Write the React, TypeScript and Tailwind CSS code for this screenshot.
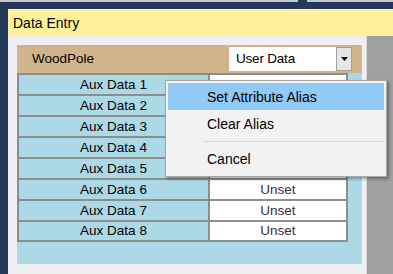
import React from "react";

const font = { fontFamily: '"Liberation Sans", Arial, sans-serif' };

export default function App() {
  const rows = [1, 2, 3, 4, 5, 6, 7, 8];
  return (
    <div
      className="relative w-[393px] h-[274px] overflow-hidden bg-[#26395a] flex flex-col text-black"
      style={font}
    >
      <div className="h-[2px] flex shrink-0">
        <div className="w-[298px] bg-[#c3c8d1]" />
        <div className="w-[9px]" />
        <div className="flex-1 bg-[#c3c8d1]" />
      </div>
      <div className="flex-1 flex flex-col pl-[8px] pt-[7px]">
        <div className="h-[27px] shrink-0 bg-[#fff19c] flex items-center pl-[5px] text-[14px] leading-none">
          Data Entry
        </div>
        <div className="flex-1 flex">
          <div className="w-[359px] bg-[#f0f0f0] pl-[9px] pt-[9px] border-r border-[#d8d8d8]">
            <div className="w-[345px] h-[219px] bg-[#add8e6] flex flex-col">
              <div className="h-[28px] shrink-0 bg-[#d2b48c] flex items-center">
                <span className="pl-[15px] text-[13.5px] leading-none">WoodPole</span>
                <div className="ml-auto mr-[10px] flex h-[24px]">
                  <div className="w-[107px] bg-white flex items-center pl-[7px] text-[13.5px] leading-none tracking-[-0.2px]">
                    User Data
                  </div>
                  <div className="w-[16px] bg-[#e6e6e6] border border-[#a0a0a0] flex items-center justify-center">
                    <svg width="7" height="4" viewBox="0 0 7 4">
                      <path d="M0 0H7L3.5 4Z" fill="#000" />
                    </svg>
                  </div>
                </div>
              </div>
              <div className="w-[331px] flex flex-col">
                {rows.map((n) => (
                  <div
                    key={n}
                    className={`flex ${n === 8 ? "h-[22px] border-b-2 border-[#8d8d8d]" : "h-[21px]"}`}
                  >
                    <div className="w-[191px] border-l-2 border-t-2 border-[#8d8d8d] flex items-center justify-center text-[13.5px] leading-none">
                      Aux Data {n}
                    </div>
                    <div className="flex-1 bg-white border-l-2 border-t-2 border-r-2 border-[#8d8d8d] flex items-center justify-center text-[13.5px] leading-none text-[#3a2a4c]">
                      {n === 1 || n > 5 ? "Unset" : ""}
                    </div>
                  </div>
                ))}
              </div>
            </div>
          </div>
          <div className="flex-1 bg-[#a0a0a0]" />
        </div>
      </div>

      <div className="absolute left-[165px] top-[80px] w-[222px] h-[97px] bg-[#f2f2f2] border border-[#a8a8a8] shadow-[2px_2px_3px_rgba(0,0,0,0.35)] p-[2px] text-[14px] leading-none">
        <div className="h-[27px] bg-[#91c9f7] flex items-center pl-[39px]">Set Attribute Alias</div>
        <div className="h-[28px] flex items-center pl-[39px]">Clear Alias</div>
        <div className="h-[7px] flex items-center pl-[35px]">
          <div className="h-px w-full bg-[#d7d7d7]" />
        </div>
        <div className="h-[28px] flex items-center pl-[39px]">Cancel</div>
      </div>
    </div>
  );
}
